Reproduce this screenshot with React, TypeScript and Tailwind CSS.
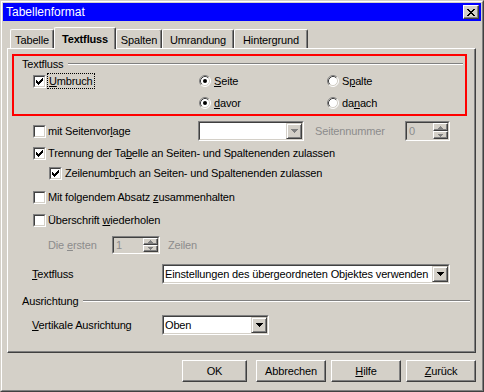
import type { ReactNode } from "react";

function U({ children }: { children: ReactNode }) {
  return <u className="underline decoration-1 underline-offset-1">{children}</u>;
}

function Check({ checked }: { checked?: boolean }) {
  const cols = [2, 3, 4, 3, 2, 1, 0];
  return (
    <span className="flex w-[13px] h-[13px] shrink-0 border border-t-[#808080] border-l-[#808080] border-r-white border-b-white">
      <span className="flex flex-1 items-center justify-center border border-t-[#404040] border-l-[#404040] border-r-[#d4d0c8] border-b-[#d4d0c8] bg-white">
        {checked && (
          <svg width="7" height="7" viewBox="0 0 7 7" shapeRendering="crispEdges">
            {cols.map((y, x) => (
              <rect key={x} x={x} y={y} width="1" height="3" fill="#000" />
            ))}
          </svg>
        )}
      </span>
    </span>
  );
}

function Radio({ checked }: { checked?: boolean }) {
  return (
    <svg width="12" height="12" viewBox="0 0 12 12" className="shrink-0">
      <circle cx="6" cy="6" r="5" fill="#fff" />
      <path d="M2.11 9.89 A5.5 5.5 0 0 1 9.89 2.11" stroke="#808080" fill="none" />
      <path d="M9.89 2.11 A5.5 5.5 0 0 1 2.11 9.89" stroke="#fff" fill="none" />
      <path d="M2.82 9.18 A4.5 4.5 0 0 1 9.18 2.82" stroke="#404040" fill="none" />
      <path d="M9.18 2.82 A4.5 4.5 0 0 1 2.82 9.18" stroke="#d4d0c8" fill="none" />
      {checked && <circle cx="6" cy="6" r="2" fill="#000" />}
    </svg>
  );
}

function Arrow({ disabled }: { disabled?: boolean }) {
  return (
    <svg width="7" height="4" viewBox="0 0 7 4" shapeRendering="crispEdges">
      <path d="M0 0h7v1h-1v1h-1v1h-1v1h-1v-1h-1v-1h-1v-1h-1z" fill={disabled ? "#808080" : "#000"} />
    </svg>
  );
}

function Combo({ w, value, disabled }: { w: string; value?: string; disabled?: boolean }) {
  return (
    <div className={`${w} h-[20px] flex shrink-0 border border-t-[#808080] border-l-[#808080] border-r-white border-b-white`}>
      <div className="flex flex-1 min-w-0 border border-t-[#404040] border-l-[#404040] border-r-[#d4d0c8] border-b-[#d4d0c8] bg-white">
        <span className="flex-1 pl-[1px] leading-[16px] whitespace-nowrap overflow-hidden">{value}</span>
        <div className="w-[16px] h-full flex items-center justify-center bg-[#d4d0c8] border border-t-[#d4d0c8] border-l-[#d4d0c8] border-r-[#404040] border-b-[#404040] shadow-[inset_1px_1px_0_#fff,inset_-1px_-1px_0_#808080]">
          <Arrow disabled={disabled} />
        </div>
      </div>
    </div>
  );
}

function SpinBtn({ up }: { up?: boolean }) {
  return (
    <div className="flex-1 flex items-center justify-center bg-[#d4d0c8] border border-t-white border-l-white border-r-[#404040] border-b-[#404040] shadow-[inset_-1px_-1px_0_#808080]">
      <svg width="5" height="3" viewBox="0 0 5 3" shapeRendering="crispEdges" className={up ? "rotate-180" : ""}>
        <path d="M0 0h5v1h-1v1h-1v1h-1v-1h-1v-1h-1z" fill="#808080" />
      </svg>
    </div>
  );
}

function Spin({ w, h, value }: { w: string; h: string; value: string }) {
  return (
    <div className={`${w} ${h} flex shrink-0 border border-t-[#808080] border-l-[#808080] border-r-white border-b-white`}>
      <div className="flex flex-1 border border-t-[#404040] border-l-[#404040] border-r-[#d4d0c8] border-b-[#d4d0c8] bg-[#d4d0c8]">
        <span className="flex-1 pl-[2px] text-[#8c8c8c] flex items-center">{value}</span>
        <div className="w-[15px] flex flex-col">
          <SpinBtn up />
          <SpinBtn />
        </div>
      </div>
    </div>
  );
}

function Tab({ w, active, children }: { w: string; active?: boolean; children: ReactNode }) {
  return (
    <div
      className={`${w} ${
        active ? "h-[22px] -mb-px relative z-10 font-bold" : "h-[19px]"
      } flex justify-center pt-[2px] items-center bg-[#d4d0c8] border-t border-l border-r border-t-white border-l-white border-r-[#404040] rounded-t-[2px] shadow-[inset_-1px_0_0_#808080]`}
    >
      {children}
    </div>
  );
}

function Button({ w, children }: { w: string; children: ReactNode }) {
  return (
    <div className={`${w} h-[22px] flex items-center justify-center bg-[#d4d0c8] border border-t-white border-l-white border-r-[#404040] border-b-[#404040] shadow-[inset_-1px_-1px_0_#808080]`}>
      {children}
    </div>
  );
}

function GroupHead({ label, pl, pr }: { label: string; pl: string; pr: string }) {
  return (
    <div className={`h-[14px] flex items-center ${pl} ${pr}`}>
      <span>{label}</span>
      <div className="flex-1 ml-[5px] h-[2px] border-t border-b border-t-[#808080] border-b-white" />
    </div>
  );
}

const closeRows = [
  [0, 1, 6, 7],
  [1, 2, 5, 6],
  [2, 3, 4, 5],
  [3, 4],
  [2, 3, 4, 5],
  [1, 2, 5, 6],
  [0, 1, 6, 7],
];

export default function App() {
  return (
    <div className="w-[484px] h-[392px] bg-[#d4d0c8] border border-t-[#d4d0c8] border-l-[#d4d0c8] border-r-[#404040] border-b-[#404040] font-['Liberation_Sans',Arial,sans-serif] text-[11px] tracking-[-0.15px] text-black leading-[13px]">
      <div className="h-full flex flex-col border border-t-white border-l-white border-r-[#808080] border-b-[#808080] p-px">
        {/* title bar */}
        <div className="h-[18px] shrink-0 flex items-center justify-between bg-[#0000ff] pl-[3px] pr-[2px]">
          <span className="text-white text-[12px] tracking-normal">Tabellenformat</span>
          <div className="w-[16px] h-[14px] flex items-center justify-center bg-[#d4d0c8] border border-t-white border-l-white border-r-[#404040] border-b-[#404040] shadow-[inset_-1px_-1px_0_#808080]">
            <svg width="8" height="7" viewBox="0 0 8 7" shapeRendering="crispEdges">
              {closeRows.map((xs, y) =>
                xs.map((x) => <rect key={`${x}-${y}`} x={x} y={y} width="1" height="1" fill="#000" />)
              )}
            </svg>
          </div>
        </div>

        {/* tabs + panel */}
        <div className="mt-[6px] ml-[4px] w-[469px]">
          <div className="h-[21px] flex items-end pl-[3px]">
            <Tab w="w-[44px]">Tabelle</Tab>
            <Tab w="w-[62px]" active>
              Textfluss
            </Tab>
            <Tab w="w-[46px]">Spalten</Tab>
            <Tab w="w-[72px]">Umrandung</Tab>
            <Tab w="w-[74px]">Hintergrund</Tab>
          </div>

          <div className="h-[305px] flex flex-col border border-t-white border-l-white border-r-[#404040] border-b-[#404040] shadow-[inset_-1px_-1px_0_#808080]">
            {/* Textfluss group (highlighted) */}
            <div className="mt-[5px] ml-[4px] w-[455px] h-[62px] flex flex-col border-2 border-[#ff0000]">
              <div className="mt-px">
                <GroupHead label="Textfluss" pl="pl-[8px]" pr="pr-[2px]" />
              </div>
              <div className="h-[20px] flex items-center pl-[19px]">
                <div className="w-[166px] flex items-center">
                  <Check checked />
                  <span className="ml-px border border-dotted border-black px-px leading-[14px]">
                    <U>U</U>mbruch
                  </span>
                </div>
                <div className="w-[128px] flex items-center gap-[3px]">
                  <Radio checked />
                  <span>
                    <U>S</U>eite
                  </span>
                </div>
                <div className="flex items-center gap-[3px]">
                  <Radio />
                  <span>
                    S<U>p</U>alte
                  </span>
                </div>
              </div>
              <div className="mt-[2px] h-[20px] flex items-center pl-[19px]">
                <div className="w-[166px]" />
                <div className="w-[128px] flex items-center gap-[3px]">
                  <Radio checked />
                  <span>
                    <U>d</U>avor
                  </span>
                </div>
                <div className="flex items-center gap-[3px]">
                  <Radio />
                  <span>
                    da<U>n</U>ach
                  </span>
                </div>
              </div>
            </div>

            {/* mit Seitenvorlage */}
            <div className="mt-[5px] h-[20px] flex items-center pl-[25px]">
              <div className="w-[165px] flex items-center gap-[2px]">
                <Check />
                <span>
                  mit Seitenvor<U>l</U>age
                </span>
              </div>
              <Combo w="w-[106px]" disabled />
              <span className="ml-[11px] w-[90px] text-[#8c8c8c]">Seitennummer</span>
              <Spin w="w-[45px]" h="h-[20px]" value="0" />
            </div>

            <div className="mt-[2px] h-[20px] flex items-center gap-[2px] pl-[25px]">
              <Check checked />
              <span>
                Trennung der Ta<U>b</U>elle an Seiten- und Spaltenenden zulassen
              </span>
            </div>

            <div className="h-[20px] flex items-center gap-[3px] pl-[41px]">
              <Check checked />
              <span>
                Zeilenumb<U>r</U>uch an Seiten- und Spaltenenden zulassen
              </span>
            </div>

            <div className="mt-[4px] h-[20px] flex items-center gap-[2px] pl-[25px]">
              <Check />
              <span>
                Mit folgendem Absatz <U>z</U>usammenhalten
              </span>
            </div>

            <div className="mt-[3px] h-[20px] flex items-center gap-[2px] pl-[25px]">
              <Check />
              <span>
                Überschrift <U>w</U>iederholen
              </span>
            </div>

            <div className="mt-[5px] h-[20px] flex items-center pl-[40px]">
              <span className="w-[64px] text-[#8c8c8c]">
                Die <U>e</U>rsten
              </span>
              <Spin w="w-[48px]" h="h-[18px]" value="1" />
              <span className="ml-[8px] text-[#8c8c8c]">Zeilen</span>
            </div>

            <div className="mt-[9px] h-[20px] flex items-center pl-[24px]">
              <span className="w-[130px]">
                <U>T</U>extfluss
              </span>
              <Combo w="w-[288px]" value="Einstellungen des übergeordneten Objektes verwenden" />
            </div>

            <div className="mt-[10px]">
              <GroupHead label="Ausrichtung" pl="pl-[14px]" pr="pr-[5px]" />
            </div>

            <div className="mt-[7px] h-[20px] flex items-center pl-[24px]">
              <span className="w-[130px]">
                <U>V</U>ertikale Ausrichtung
              </span>
              <Combo w="w-[107px]" value="Oben" />
            </div>
          </div>
        </div>

        {/* buttons */}
        <div className="mt-[7px] flex pl-[179px]">
          <Button w="w-[65px]">OK</Button>
          <div className="ml-[9px]">
            <Button w="w-[70px]">Abbrechen</Button>
          </div>
          <div className="ml-[5px]">
            <Button w="w-[70px]">
              <span>
                <U>H</U>ilfe
              </span>
            </Button>
          </div>
          <div className="ml-[5px]">
            <Button w="w-[70px]">
              <span>
                <U>Z</U>urück
              </span>
            </Button>
          </div>
        </div>
      </div>
    </div>
  );
}
